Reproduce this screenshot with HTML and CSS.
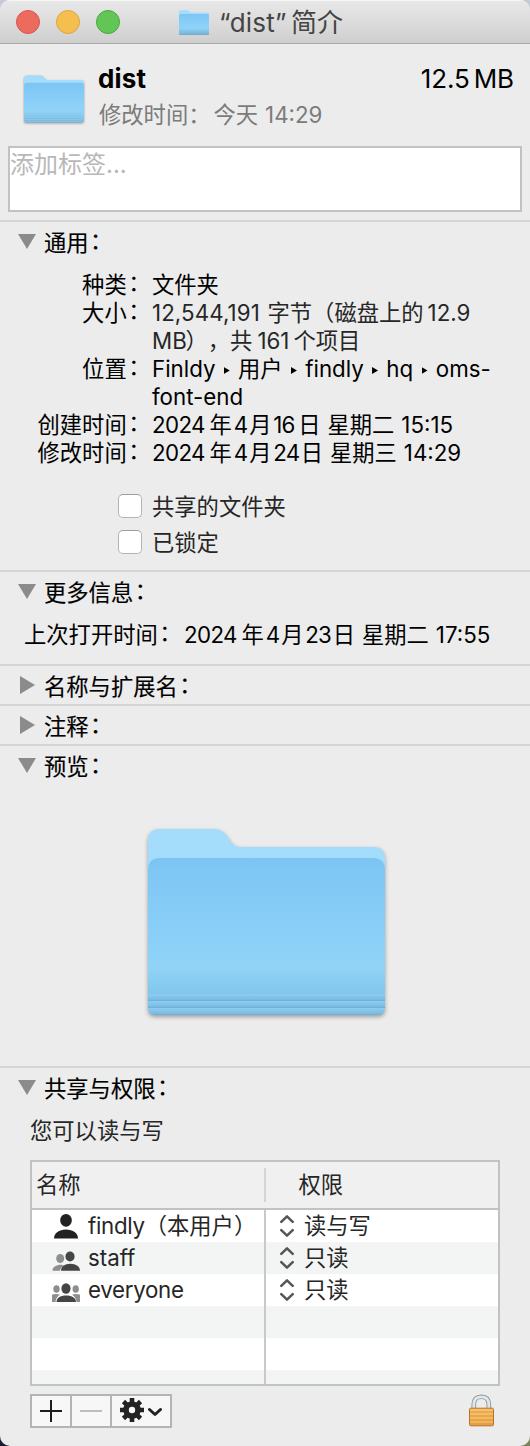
FILE: index.html
```html
<!DOCTYPE html>
<html lang="zh-CN">
<head>
<meta charset="utf-8">
<title>“dist”简介</title>
<link rel="stylesheet" href="styles.css">
</head>
<body>
<svg class="defs" width="0" height="0" aria-hidden="true">
  <defs>
    <linearGradient id="front" x1="0" y1="0" x2="0" y2="1">
      <stop offset="0" stop-color="#7cc5f3"/><stop offset=".5" stop-color="#89cef8"/><stop offset=".8" stop-color="#90d3f6"/><stop offset="1" stop-color="#83c6ed"/>
    </linearGradient>
    <linearGradient id="strip" x1="0" y1="0" x2="0" y2="1">
      <stop offset="0" stop-color="#8fcdf0"/><stop offset=".75" stop-color="#7bbde5"/><stop offset="1" stop-color="#69add8"/>
    </linearGradient>
    <symbol id="folder" viewBox="0 0 237 186">
      <path fill="#a4dcfb" d="M0 12Q0 0 12 0H67Q74 0 79 7L84 14Q88 18 92 18H226Q237 18 237 30V60H0Z"/>
      <path fill="url(#front)" d="M0 41Q0 29 12 29H225Q237 29 237 41V166H0Z"/>
      <path fill="url(#strip)" d="M0 165H237V172H0Z"/>
      <path fill="url(#strip)" d="M0 172H237V179H0Z"/>
      <path fill="url(#strip)" d="M0 179H237Q237 186 230 186H7Q0 186 0 179Z"/>
    </symbol>
    <symbol id="updown" viewBox="0 0 14 22">
      <path fill="none" stroke="#555" stroke-width="2.5" stroke-linecap="round" stroke-linejoin="round" d="M1.3 6.8 7 1.4l5.7 5.4M1.3 15.2 7 20.6l5.7-5.4"/>
    </symbol>
  </defs>
</svg>
<main class="window">
  <header class="titlebar">
    <div class="lights"><i class="light red"></i><i class="light yellow"></i><i class="light green"></i></div>
    <svg class="title-folder"><use href="#folder"/></svg>
    <h1 class="title"><span class="title-latin">“dist”</span>简介</h1>
  </header>

  <section class="summary">
    <svg class="summary-folder"><use href="#folder"/></svg>
    <div class="summary-text">
      <div class="summary-top"><b class="name">dist</b><span class="size">12.5<span class="unit">MB</span></span></div>
      <div class="modified">修改时间：<span class="today">今天</span><span class="clock">14:29</span></div>
    </div>
  </section>
  <div class="tags">添加标签<span class="dots">...</span></div>

  <section class="section general">
    <h2 class="head"><i class="tri down"></i>通用<span class="colon">：</span></h2>
    <dl class="facts">
      <dt>种类<span class="colon">：</span></dt><dd>文件夹</dd>
      <dt>大小<span class="colon">：</span></dt><dd class="soft"><span class="num bytes">12,544,191</span>字节（磁盘上的<span class="used">12.9</span><br><span class="num unit-mb">MB</span>），共<span class="num items">161</span>个项目</dd>
      <dt>位置<span class="colon">：</span></dt><dd>Finldy<i class="sep"></i>用户<i class="sep"></i>findly<i class="sep"></i>hq<i class="sep"></i>oms-<br>font-end</dd>
      <dt>创建时间<span class="colon">：</span></dt><dd><span class="num year">2024</span>年<span class="num month">4</span>月<span class="num day narrow">16</span>日<span class="week">星期二</span>15:15</dd>
      <dt>修改时间<span class="colon">：</span></dt><dd><span class="num year">2024</span>年<span class="num month">4</span>月<span class="num day">24</span>日<span class="week">星期三</span>14:29</dd>
    </dl>
    <div class="checks">
      <label class="check"><i class="box"></i><span class="check-text">共享的文件夹</span></label>
      <label class="check"><i class="box"></i><span class="check-text">已锁定</span></label>
    </div>
  </section>

  <section class="section more">
    <h2 class="head"><i class="tri down"></i>更多信息<span class="colon">：</span></h2>
    <div class="opened"><span class="opened-label">上次打开时间<span class="colon">：</span></span><span class="num year">2024</span>年<span class="num month">4</span>月<span class="num day">23</span>日<span class="week">星期二</span>17:55</div>
  </section>
  <section class="section"><h2 class="head"><i class="tri right"></i>名称与扩展名<span class="colon">：</span></h2></section>
  <section class="section"><h2 class="head"><i class="tri right"></i>注释<span class="colon">：</span></h2></section>
  <section class="section preview">
    <h2 class="head"><i class="tri down"></i>预览<span class="colon">：</span></h2>
    <svg class="preview-folder"><use href="#folder"/></svg>
  </section>

  <section class="section sharing">
    <h2 class="head"><i class="tri down"></i>共享与权限<span class="colon">：</span></h2>
    <p class="access">您可以读与写</p>
    <div class="table">
      <div class="row thead"><div class="cell th-name">名称</div><div class="cell th-priv">权限</div></div>
      <div class="row">
        <div class="cell user">
          <svg class="who" viewBox="0 0 28 26"><g fill="#222"><ellipse cx="14" cy="7.3" rx="5.8" ry="6.4"/><path d="M2 25.5C2 20 7 16.5 14 16.5S26 20 26 25.5Z"/></g></svg><span class="login">findly</span>（本用户）</div>
        <div class="cell priv"><svg class="updown"><use href="#updown"/></svg>读与写</div>
      </div>
      <div class="row alt">
        <div class="cell user">
          <svg class="who" viewBox="0 -3.3 28 26"><g fill="#8e8e8e"><ellipse cx="8.2" cy="10.2" rx="4" ry="4.5"/><path d="M.5 22.5C.5 19 4 16.5 9.5 16.5L12 17.3C9.5 18.8 8.3 20.5 8 22.5Z"/></g><g fill="#454545"><ellipse cx="18" cy="8.2" rx="4.6" ry="5"/><path d="M9 22.5C9 18.5 12.5 15.5 18.3 15.5S28 18.5 28 22.5Z"/></g></svg>staff</div>
        <div class="cell priv"><svg class="updown"><use href="#updown"/></svg>只读</div>
      </div>
      <div class="row">
        <div class="cell user">
          <svg class="who" viewBox="0 -2.5 28 26"><g fill="#8e8e8e"><ellipse cx="4.5" cy="9.5" rx="3.2" ry="3.8"/><ellipse cx="23.7" cy="9.5" rx="3.2" ry="3.8"/><path d="M0 15.2Q4 14 8 15.2Q4 17.5 3.5 22.5H0ZM28 15.2Q24 14 20 15.2Q24 17.5 24.5 22.5H28Z"/></g><g fill="#454545"><ellipse cx="14" cy="9" rx="4.6" ry="5.2"/><path d="M4.5 22.5C4.5 18.5 8 16 14 16S24 18.5 24 22.5Z"/></g></svg><span class="login">everyone</span></div>
        <div class="cell priv"><svg class="updown"><use href="#updown"/></svg>只读</div>
      </div>
      <div class="row alt"><div class="cell user"></div><div class="cell"></div></div>
      <div class="row"><div class="cell user"></div><div class="cell"></div></div>
      <div class="row alt last"><div class="cell user"></div><div class="cell"></div></div>
    </div>
    <footer class="bottom">
      <div class="buttons">
        <span class="btn"><svg width="22" height="22" viewBox="0 0 22 22"><path stroke="#1c1c1c" stroke-width="2" d="M0 11H22M11 0V22"/></svg></span>
        <span class="btn"><svg width="22" height="22" viewBox="0 0 22 22"><path stroke="#bdbdbd" stroke-width="2" d="M0 11H22"/></svg></span>
        <span class="btn gear"><svg width="42" height="24" viewBox="0 0 42 24">
          <g stroke="#222" stroke-width="4.6"><path d="M12 0V6M12 18V24M0 12H6M18 12H24M3.5 3.5 7.8 7.8M16.2 16.2l4.3 4.3M20.5 3.5 16.2 7.8M7.8 16.2 3.5 20.5"/></g>
          <circle cx="12" cy="12" r="6" fill="none" stroke="#222" stroke-width="5.6"/>
          <path fill="none" stroke="#222" stroke-width="3" stroke-linecap="round" stroke-linejoin="round" d="M29.5 11.5 35 16.5l5.5-5"/></svg></span>
      </div>
      <svg class="lock" width="27" height="34" viewBox="1.2 0 27 34">
        <defs>
          <linearGradient id="brass" x1="0" y1="0" x2="0" y2="1"><stop offset="0" stop-color="#f4bb62"/><stop offset="1" stop-color="#e9a040"/></linearGradient>
        </defs>
        <path fill="none" stroke="#8b949a" stroke-width="4.6" d="M6 15V10.5Q6 2.8 13.5 2.8T21 10.5V15"/>
        <path fill="none" stroke="#dfe7eb" stroke-width="2.8" d="M6 15V10.5Q6 2.8 13.5 2.8T21 10.5V15"/>
        <rect x="1.7" y="14.2" width="24" height="17.6" rx="1.2" fill="url(#brass)" stroke="#b9712a" stroke-width="1"/>
        <path stroke="#fbcb7c" stroke-width=".9" d="M2.5 16H25M2.5 20H25M2.5 24H25M2.5 28H25"/>
        <path stroke="#dd983f" stroke-width=".7" d="M2.5 18H25M2.5 22H25M2.5 26H25M2.5 30H25"/>
      </svg>
    </footer>
  </section>
</main>
</body>
</html>
```
FILE: styles.css
```css
* { box-sizing: border-box; }
body {
  margin: 0;
  background: linear-gradient(to bottom, #c3cbd6 0, #c3cbd6 50%, transparent 50%), linear-gradient(to right, #1c1c34 50%, #7b8560 50%);
  font-family: Inter, "Noto Sans CJK SC", sans-serif;
  font-size: 22.3px;
  line-height: 28px;
  color: #000;
  text-autospace: no-autospace;
  text-spacing-trim: space-all;
}
.defs { position: absolute; }
i { display: inline-block; font-style: normal; }
.window { width: 530px; height: 1446px; background: #ececec; border-radius: 10px; overflow: hidden; white-space: nowrap; }

.titlebar {
  display: flex; align-items: center; height: 44px; padding: 0 16px;
  background: linear-gradient(#e8e8e8, #cfcfcf);
  border-top: 1px solid #f6f6f6; border-bottom: 1px solid #a9a9a9;
}
.lights { display: flex; gap: 16px; }
.light { width: 24px; height: 24px; border-radius: 50%; border: 1px solid; }
.red { background: #ed6a5f; border-color: #d9564c; }
.yellow { background: #f5bf50; border-color: #dba53c; }
.green { background: #61c656; border-color: #4ba73d; }
.title-folder { width: 30px; height: 24px; margin: 0 10px 0 59px; filter: drop-shadow(0 1px 0 #5b9dc5); }
.title { display: flex; margin: 0; padding-top: 1px; font-size: 26px; font-weight: 400; color: #454545; }
.title-latin { width: 72px; letter-spacing: .2px; }

.summary { display: flex; height: 102px; padding: 20px 16px 0 24px; }
.summary-folder { width: 60px; height: 48px; margin-top: 11px; filter: drop-shadow(0 1px 1px #0005); }
.summary-text { flex: 1; margin-left: 14px; }
.summary-top { display: flex; justify-content: space-between; height: 32px; line-height: 30px; font-size: 26px; }
.name { font-size: 26px; letter-spacing: .2px; }
.size { letter-spacing: -.1px; }
.unit { margin-left: 4px; }
.modified { padding-left: 1px; color: #7b7b7b; line-height: 37px; }
.today { margin-left: 3px; margin-right: 7px; }
.tags { height: 66px; margin: 0 8px 8px; border: 2px solid #c2c2c2; background: #fff; color: #b8b8b8; font-size: 24px; line-height: 33px; }

.section { height: 40px; border-top: 2px solid #d4d4d4; }
.head { display: flex; align-items: center; height: 40px; margin: 0; padding: 1px 0 0 18px; font-size: 22.3px; font-weight: 400; -webkit-text-stroke: .15px; }
.colon { position: relative; left: 1.5px; top: -2px; }
.tri { background: #8b8b8b; }
.down { width: 18px; height: 15px; margin: -2px 8px 0 0; clip-path: polygon(0 0, 100% 0, 50% 100%); }
.right { width: 15px; height: 18px; margin: -3px 9px 0 2px; clip-path: polygon(0 0, 100% 50%, 0 100%); }

.general { height: 350px; }
.facts { display: grid; grid-template-columns: 136px 1fr; column-gap: 16px; margin: 9px 0 0; }
.facts dt { justify-self: end; margin-right: -13px; }
.facts dd { margin: 0; }
.soft, .checks, .access, .table { color: #262626; }
.num { display: inline-block; }
.bytes { width: 115.5px; letter-spacing: .1px; }
.used { margin-left: 4px; }
.unit-mb { width: 33.5px; }
.items { width: 41px; padding-left: 5px; }
.year { width: 57.5px; letter-spacing: -.6px; }
.month { width: 17.5px; padding-left: 2px; }
.day { width: 29px; padding-left: 1.5px; letter-spacing: -.6px; }
.day.narrow { width: 26.5px; }
.sep { width: 6px; height: 7px; margin: 0 8.3px 3px; background: #000; clip-path: polygon(0 0, 100% 50%, 0 100%); }
.week { margin: 0 7px; }
.checks { display: grid; gap: 8px; margin: 25px 0 0 118px; }
.check { display: flex; align-items: center; height: 28px; }
.check-text { padding-top: 1px; }
.box { width: 24px; height: 24px; margin-right: 10px; border: 1px solid #b4b4b4; border-top-color: #9e9e9e; border-radius: 5px; background: #fff; }

.more { height: 94px; }
.opened { display: flex; margin: 9px 0 0 24px; }
.opened-label { width: 160px; }
.preview { height: 322px; }
.preview-folder { display: block; width: 237px; height: 186px; margin: 43px 0 0 148px; filter: drop-shadow(0 2px 2px #0005); overflow: visible; }

.sharing { height: 380px; }
.access { margin: 9px 30px 15px; }
.table { width: 470px; height: 226px; margin-left: 30px; border: 2px solid #c2c2c2; overflow: hidden; }
.row { display: flex; height: 32px; background: #fff; }
.alt { background: #f3f5f5; }
.thead { height: 48px; background: #f0f0f0; border-bottom: 2px solid #c2c2c2; }
.last { height: 14px; }
.cell { display: flex; align-items: center; }
.user { width: 234px; border-right: 2px solid #c9c9c9; padding-left: 20px; }
.who { width: 28px; height: 26px; margin-right: 8px; }
.login { letter-spacing: -.3px; }
.th-name { width: 234px; height: 34px; margin-top: 6px; padding-left: 4px; border-right: 2px solid #d4d4d4; }
.th-priv { padding-left: 32.5px; }
.priv { padding-left: 14px; }
.updown { width: 14px; height: 22px; margin-right: 10px; }
.bottom { display: flex; justify-content: space-between; margin: 8px 34px 0 30px; }
.buttons { display: flex; width: 142px; height: 34px; border: 2px solid #b4b4b4; background: #f7f7f7; }
.btn { display: flex; align-items: center; justify-content: center; width: 40px; border-right: 2px solid #b4b4b4; }
.btn.gear { width: 58px; border: 0; padding-bottom: 2px; }
.lock { display: block; }
```
